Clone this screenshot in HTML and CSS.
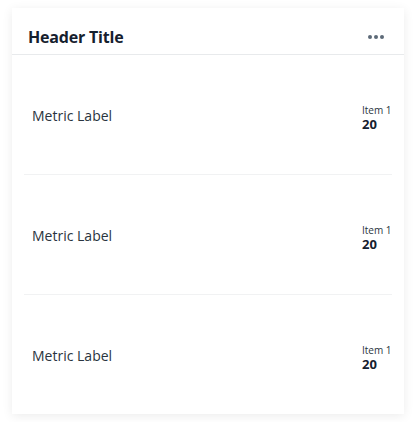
FILE: index.html
```html
<!DOCTYPE html>
<html>
<head>
<meta charset="utf-8">
<link rel="stylesheet" href="styles.css">
</head>
<body>
<div class="card">
  <div class="card-header">
    <h2 class="title">Header Title</h2>
    <div class="more" aria-label="More">
      <span></span><span></span><span></span>
    </div>
  </div>
  <div class="rows">
    <div class="row">
      <div class="label">Metric Label</div>
      <div class="value"><div class="item">Item 1</div><div class="num">20</div></div>
    </div>
    <div class="row">
      <div class="label">Metric Label</div>
      <div class="value"><div class="item">Item 1</div><div class="num">20</div></div>
    </div>
    <div class="row">
      <div class="label">Metric Label</div>
      <div class="value"><div class="item">Item 1</div><div class="num">20</div></div>
    </div>
  </div>
</div>
</body>
</html>
```
FILE: styles.css
```css
html, body {
  margin: 0;
  padding: 0;
  background: #ffffff;
}
body {
  padding: 8px 12px;
  font-family: "Open Sans", "Noto Sans", sans-serif;
  color: #1d2733;
}
.card {
  width: 392px;
  height: 406px;
  background: #fff;
  box-shadow: 0 2px 10px rgba(0, 0, 0, 0.08);
  display: flex;
  flex-direction: column;
}
.card-header {
  height: 46px;
  box-sizing: border-box;
  border-bottom: 1px solid #e8eaec;
  display: flex;
  align-items: center;
  justify-content: space-between;
  padding: 10px 20px 0 16px;
  margin-top: 1px;
}
.title {
  margin: 0;
  font-size: 16px;
  line-height: 22px;
  font-weight: 700;
  letter-spacing: -0.2px;
  color: #15202e;
}
.more {
  display: flex;
  gap: 2px;
}
.more span {
  width: 4px;
  height: 4px;
  border-radius: 50%;
  background: #5d6a78;
}
.rows {
  flex: 1;
  display: flex;
  flex-direction: column;
  padding: 0 12px;
}
.row {
  flex: 1;
  display: flex;
  align-items: center;
  justify-content: space-between;
  padding: 2px 0 0 8px;
  border-bottom: 1px solid #f1f2f3;
}
.row:last-child {
  border-bottom: none;
}
.label {
  font-size: 14px;
  color: #2a3440;
}
.value {
  display: flex;
  flex-direction: column;
  width: 30px;
  margin-top: 3px;
}
.item {
  font-size: 10px;
  line-height: 14px;
  color: #2a3440;
}
.num {
  font-size: 13px;
  line-height: 15px;
  font-weight: 700;
  color: #15202e;
}
```
